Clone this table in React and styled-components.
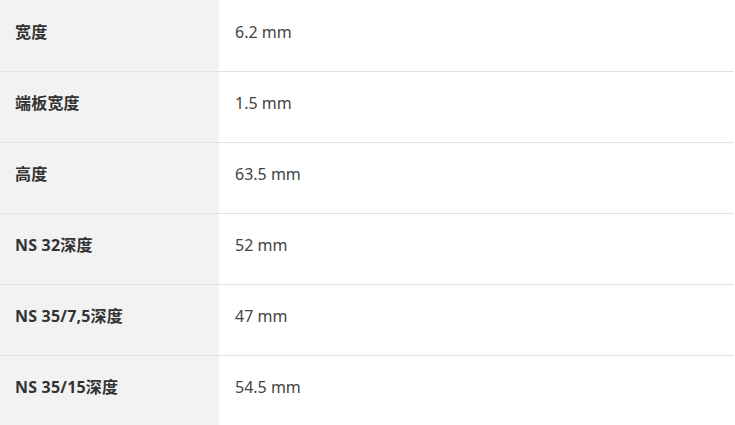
import React from "react";
import styled, { createGlobalStyle } from "styled-components";

const GlobalStyle = createGlobalStyle`
  html, body {
    margin: 0;
    padding: 0;
    background: #fff;
  }
  body {
    font-family: "Noto Sans", "Noto Sans CJK SC", sans-serif;
  }
`;

const SpecTable = styled.table`
  width: 734px;
  border-collapse: separate;
  border-spacing: 0;
  table-layout: fixed;
`;

const Row = styled.tr``;

const cellBase = `
  box-sizing: border-box;
  height: 71px;
  padding-top: 19px;
  padding-bottom: 27px;
  vertical-align: top;
  font-size: 16px;
  line-height: 24px;
  border-bottom: 1px solid #e2e2e6;
`;

const LabelCell = styled.th`
  ${cellBase}
  width: 219px;
  background: #f2f2f2;
  padding-left: 15px;
  padding-right: 10px;
  text-align: left;
  font-weight: 700;
  color: #333;
  letter-spacing: 0.2px;

  ${Row}:first-child & {
    height: 72px;
    padding-top: 20px;
  }
  ${Row}:last-child & {
    border-bottom: none;
  }
`;

const ValueCell = styled.td`
  ${cellBase}
  padding-left: 16px;
  padding-right: 10px;
  font-weight: 400;
  color: #444;

  ${Row}:first-child & {
    height: 72px;
    padding-top: 20px;
  }
  ${Row}:last-child & {
    border-bottom: none;
  }
`;

const specs = [
  { label: "宽度", value: "6.2 mm" },
  { label: "端板宽度", value: "1.5 mm" },
  { label: "高度", value: "63.5 mm" },
  { label: "NS 32深度", value: "52 mm" },
  { label: "NS 35/7,5深度", value: "47 mm" },
  { label: "NS 35/15深度", value: "54.5 mm" },
];

function App() {
  return (
    <>
      <GlobalStyle />
      <SpecTable>
        <tbody>
          {specs.map((spec) => (
            <Row key={spec.label}>
              <LabelCell>{spec.label}</LabelCell>
              <ValueCell>{spec.value}</ValueCell>
            </Row>
          ))}
        </tbody>
      </SpecTable>
    </>
  );
}

export default App;
